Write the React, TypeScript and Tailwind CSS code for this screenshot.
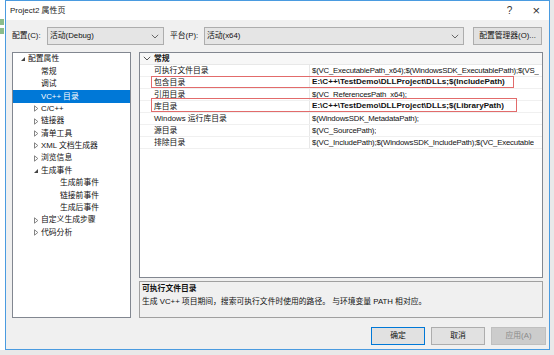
const font = { fontFamily: '"Liberation Sans", "Noto Sans CJK SC", sans-serif' };

const Expanded = () => (
  <svg width="6" height="6" viewBox="0 0 6 6" className="shrink-0">
    <path d="M5 1 L5 5 L1 5 Z" fill="#444" />
  </svg>
);

const Collapsed = () => (
  <svg width="6" height="7" viewBox="0 0 6 7" className="shrink-0">
    <path d="M1.5 0.8 L4.8 3.5 L1.5 6.2 Z" fill="none" stroke="#777" strokeWidth="0.9" />
  </svg>
);

const Chevron = ({ color = "#666" }: { color?: string }) => (
  <svg width="8" height="5" viewBox="0 0 8 5">
    <path d="M0.8 0.8 L4 4 L7.2 0.8" fill="none" stroke={color} strokeWidth="1" />
  </svg>
);

const tree: { label: string; level: number; icon?: "open" | "closed"; selected?: boolean }[] = [
  { label: "配置属性", level: 0, icon: "open" },
  { label: "常规", level: 1 },
  { label: "调试", level: 1 },
  { label: "VC++ 目录", level: 1, selected: true },
  { label: "C/C++", level: 1, icon: "closed" },
  { label: "链接器", level: 1, icon: "closed" },
  { label: "清单工具", level: 1, icon: "closed" },
  { label: "XML 文档生成器", level: 1, icon: "closed" },
  { label: "浏览信息", level: 1, icon: "closed" },
  { label: "生成事件", level: 1, icon: "open" },
  { label: "生成前事件", level: 2 },
  { label: "链接前事件", level: 2 },
  { label: "生成后事件", level: 2 },
  { label: "自定义生成步骤", level: 1, icon: "closed" },
  { label: "代码分析", level: 1, icon: "closed" },
];

const rows: { name: string; value: string; bold?: boolean }[] = [
  { name: "可执行文件目录", value: "$(VC_ExecutablePath_x64);$(WindowsSDK_ExecutablePath);$(VS_" },
  { name: "包含目录", value: "E:\\C++\\TestDemo\\DLLProject\\DLLs;$(IncludePath)", bold: true },
  { name: "引用目录", value: "$(VC_ReferencesPath_x64);" },
  { name: "库目录", value: "E:\\C++\\TestDemo\\DLLProject\\DLLs;$(LibraryPath)", bold: true },
  { name: "Windows 运行库目录", value: "$(WindowsSDK_MetadataPath);" },
  { name: "源目录", value: "$(VC_SourcePath);" },
  { name: "排除目录", value: "$(VC_IncludePath);$(WindowsSDK_IncludePath);$(VC_Executable" },
];

const indent = ["pl-[7px]", "pl-[20px]", "pl-[39px]"];

export default function App() {
  return (
    <div className="w-[554px] h-[355px] bg-[#e9e9e9] flex flex-col overflow-hidden text-[7.8px] text-[#111]" style={font}>
      <div className="flex h-[350px]">
        {/* background window peeking through */}
        <div className="w-[5px] bg-white flex flex-col pt-[19px] gap-[3px]">
          <div className="h-[6px] w-[4px] bg-[#5aa05a] opacity-70" />
          <div className="h-[6px] w-[4px] bg-[#5aa05a] opacity-70" />
        </div>

        {/* dialog */}
        <div className="w-[545px] border border-[#4a9be0] bg-[#f0f0f0] flex flex-col">
          {/* title bar */}
          <div className="h-[19px] bg-white flex items-center pl-[4px] pr-[9px]">
            <span className="text-[8px] text-[#222]">Project2 属性页</span>
            <span className="ml-auto text-[10px] text-[#333]">?</span>
            <span className="ml-[20px] text-[13px] leading-none text-[#333] font-light">×</span>
          </div>

          {/* config row */}
          <div className="flex items-center mt-[7px] pl-[6px] h-[18px]">
            <span className="w-[35px]">配置(C):</span>
            <div className="w-[117px] h-[18px] bg-[#e5e5e5] border border-[#adadad] flex items-center px-[2px]">
              <span>活动(Debug)</span>
              <span className="ml-auto mr-[2px]"><Chevron /></span>
            </div>
            <span className="ml-[6px] w-[34px]">平台(P):</span>
            <div className="w-[260px] h-[18px] bg-[#e5e5e5] border border-[#adadad] flex items-center px-[2px]">
              <span>活动(x64)</span>
              <span className="ml-auto mr-[2px]"><Chevron /></span>
            </div>
            <div className="ml-[9px] w-[69px] h-[18px] bg-[#e1e1e1] border border-[#adadad] flex items-center justify-center">
              配置管理器(O)...
            </div>
          </div>

          {/* main area */}
          <div className="flex mt-[7px] pl-[6px] gap-[8px] h-[266px]">
            {/* tree */}
            <div className="w-[119px] bg-white border border-[#828790] flex flex-col">
              {tree.map((t) => (
                <div
                  key={t.label}
                  className={`h-[12.4px] flex items-center ${indent[t.level]} ${t.selected ? "bg-[#0078d7] text-white" : ""}`}
                >
                  <span className="w-[8px] flex items-center">
                    {t.icon === "open" && <Expanded />}
                    {t.icon === "closed" && <Collapsed />}
                  </span>
                  <span>{t.label}</span>
                </div>
              ))}
            </div>

            {/* right column */}
            <div className="w-[404px] flex flex-col gap-[3px]">
              {/* property grid */}
              <div className="relative h-[226px] bg-white border border-[#828790] flex flex-col overflow-hidden">
                <div className="h-[12px] flex items-center bg-[#f7f7f7] border-b border-[#e8e8e8]">
                  <span className="w-[14px] shrink-0 flex justify-center"><Chevron color="#555" /></span>
                  <span className="font-bold">常规</span>
                </div>
                {rows.map((r) => (
                  <div key={r.name} className="h-[12px] flex items-center border-b border-[#f0f0f0]">
                    <span className="w-[14px] shrink-0 self-stretch" />
                    <span className="w-[156px] shrink-0 self-stretch flex items-center border-r border-[#e8e8e8]">{r.name}</span>
                    <span className={`pl-[2px] min-w-0 whitespace-nowrap overflow-hidden ${r.bold ? "font-bold text-[8.1px]" : "tracking-[-0.2px]"}`}>{r.value}</span>
                  </div>
                ))}
                {/* red annotation boxes */}
                <div className="absolute left-[11px] top-[23px] w-[363px] h-[12px] border border-[#e26b6b]" />
                <div className="absolute left-[11px] top-[45px] w-[366px] h-[14px] border border-[#e26b6b]" />
              </div>

              {/* description */}
              <div className="h-[37px] border border-[#a0a0a0] bg-[#f0f0f0] px-[2px] pt-[1px] flex flex-col gap-[1px]">
                <span className="font-bold">可执行文件目录</span>
                <span>生成 VC++ 项目期间，搜索可执行文件时使用的路径。 与环境变量 PATH 相对应。</span>
              </div>
            </div>
          </div>

          {/* buttons */}
          <div className="flex justify-end gap-[6px] mt-[9px] pr-[3px]">
            <div className="w-[54px] h-[18px] bg-[#e1e1e1] border border-[#0078d7] flex items-center justify-center">确定</div>
            <div className="w-[54px] h-[18px] bg-[#e1e1e1] border border-[#adadad] flex items-center justify-center">取消</div>
            <div className="w-[55px] h-[18px] bg-[#cccccc] border border-[#bfbfbf] text-[#8a8a8a] flex items-center justify-center">应用(A)</div>
          </div>
        </div>

        <div className="flex-1 bg-[#e9e9e9]" />
      </div>
      <div className="flex-1" />
    </div>
  );
}
